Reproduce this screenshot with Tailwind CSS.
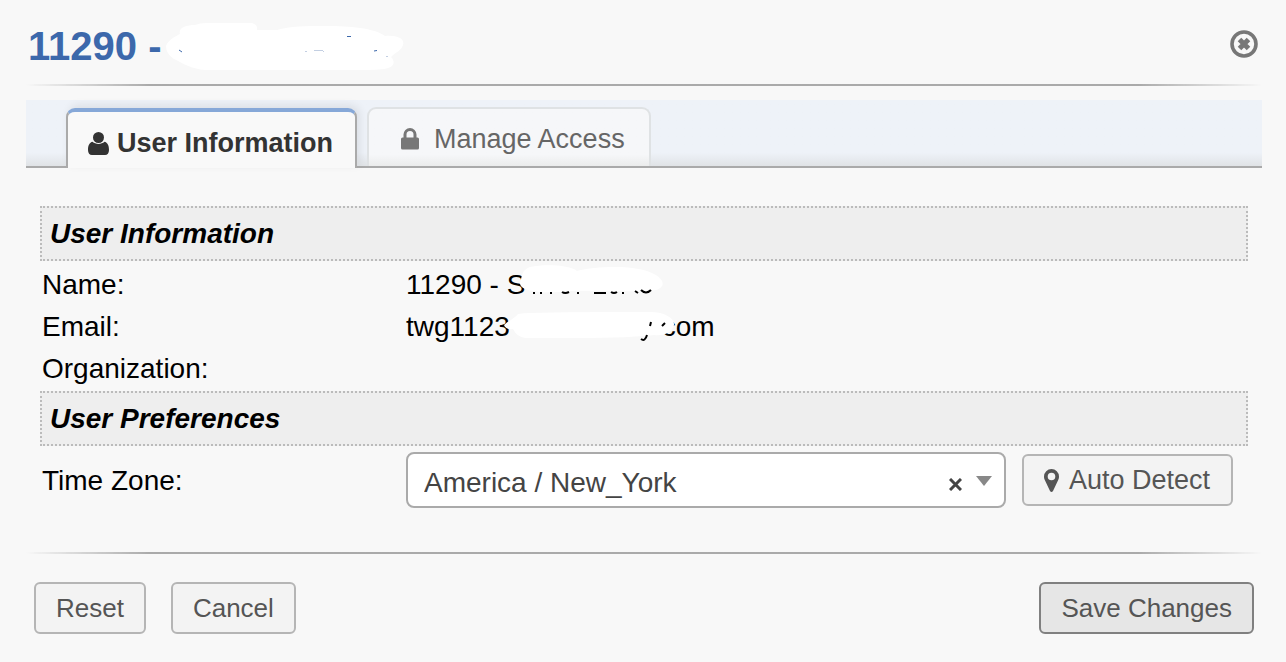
<!DOCTYPE html>
<html lang="en">

<head>
    <meta charset="UTF-8">
    <meta name="viewport" content="width=device-width, initial-scale=1.0">
    <title>User Information</title>
    <script src="https://cdn.jsdelivr.net/npm/@tailwindcss/browser@4"></script>
</head>

<body class="bg-[#f8f8f8] font-['Liberation_Sans',Arial,sans-serif] text-black">
    <!-- Header -->
    <header class="relative flex items-start justify-between px-7 pt-[26px] pb-[18px]">
        <h1 class="text-[40px] leading-10 font-bold text-[#3c68ab]">11290 -</h1>
        <svg class="absolute left-[164px] top-5" width="244" height="54" viewBox="164 20 244 54" aria-hidden="true">
            <path fill="#fff" d="M166 46C168 40 176 36 180 34C178 28 186 25 195 25Q200 23 206 23H252Q258 25 257 30H277C290 26 306 26 326 26C350 26 374 28 385 36C398 35 405 39 403 45C401 51 396 52 391 57C396 62 394 68 384 69Q376 70 366 70H205C192 69 184 64 174 59Q166 54 166 46Z"/>
            <path fill="none" stroke="#3c68ab" stroke-width="1" d="M179 50l3 2M347 36.500h4M374 51l3-.5"/>
            <path fill="none" stroke="#c3cfe2" stroke-width="1" d="M305 51.500h2M314 50.500h9M323 51.500h1M386 56.500h2"/>
        </svg>
        <button type="button" aria-label="Close" class="mt-1 cursor-pointer">
            <svg width="28" height="28" viewBox="0 0 28 28" fill="none" stroke="#777">
                <circle cx="14" cy="14" r="12" stroke-width="3.600"/>
                <path stroke-width="5" d="M9.500 9.500l9 9M18.500 9.500l-9 9"/>
            </svg>
        </button>
    </header>
    <div class="mr-6 ml-[26px] h-0.5 bg-linear-to-r from-transparent from-0% via-[#aaa] via-10% to-[#aaa] to-50% mask-r-from-90%"></div>

    <!-- Tabs -->
    <nav role="tablist" class="mr-6 ml-[26px] mt-[14px] flex h-[68px] items-end gap-2.5 border-b-2 border-[#aaa] bg-linear-to-t from-[#e0e3e6] to-[#eef2f8] to-20% pl-10">
        <button type="button" role="tab" aria-selected="true" class="-mb-0.5 flex h-[60px] items-center gap-2 rounded-t-[9px] border-x-2 border-t-4 border-x-[#aaa] border-t-[#86a8d8] bg-[#f9f9f9] pt-1.5 pr-[22px] pl-5 text-[27px] font-bold text-[#333] shadow-[3px_-3px_8px_rgba(0,0,0,0.08)]">
            <svg width="21" height="23" viewBox="0 0 21 23" fill="currentColor" aria-hidden="true">
                <circle cx="10.500" cy="5.500" r="5.500"/>
                <path d="M4.500 9.800C1.500 10.500 0 13.500 0 18C0 21 1.500 23 4 23H17C19.500 23 21 21 21 18C21 13.500 19.500 10.500 16.500 9.800C13.500 12.600 7.500 12.600 4.500 9.800Z"/>
            </svg>
            User Information
        </button>
        <button type="button" role="tab" aria-selected="false" class="flex h-[59px] items-center gap-[15px] rounded-t-[9px] border-2 border-b-0 border-[#dfe2e4] bg-linear-to-t from-[#ebecec] to-[#f6f7f9] to-20% pt-1 pr-6 pl-8 text-[27px] text-[#666]">
            <svg class="-mt-0.5" width="18" height="22" viewBox="0 0 18 22" aria-hidden="true">
                <path fill="none" stroke="#777" stroke-width="3" d="M4 11V6.500a5 5 0 0 1 10 0V11"/>
                <rect y="9.500" width="18" height="12" rx="1.500" fill="#777"/>
            </svg>
            Manage Access
        </button>
    </nav>

    <!-- Content -->
    <main class="mr-[38px] ml-10 mt-[38px] text-[28px] leading-[42px]">
        <h2 class="flex h-[55px] items-center border-2 border-dotted border-[#bbb] bg-[#eee] px-2 font-bold italic">User Information</h2>
        <dl class="grid grid-cols-[364px_1fr] px-0.5 pt-[3px] pb-px">
            <dt>Name:</dt>
            <dd class="relative">11290 - S
                <svg class="absolute left-[106px] top-0" width="154" height="36" viewBox="512 264 154 36" aria-hidden="true">
                    <path fill="#fff" d="M520 284C522 275 522 270 530 267C545 264 570 265 577 271C598 266 635 265 652 273C665 279 666 287 656 290C640 293 610 290 570 291Q545 294 528 290Q521 288 520 284Z"/>
                    <path fill="none" stroke="#000" stroke-width="2" d="M533 293h2M540 293h2M550 293h2M562 292q3 2 7 0M577 293h2M594 293h12M611 292q3 2 6 0M622 293h2M635 291l3 2M641 290q5 5 10 0"/>
                </svg>
            </dd>
            <dt>Email:</dt>
            <dd class="relative flex gap-[152px]"><span>twg1123</span><span>com</span>
                <svg class="absolute left-[92px] top-0" width="180" height="40" viewBox="498 306 180 40" aria-hidden="true">
                    <path fill="#fff" d="M504 325C508 321 514 319 518 314Q524 313 530 313C560 312 600 312 650 312C666 312 675 319 674 325C672 333 664 336 654 335C620 339 560 338 525 338Q517 337 513 329Q506 330 504 325Z"/>
                    <path fill="none" stroke="#000" stroke-width="2" d="M641 339q4 3 6-4M650 326l1-4M662 326l3-3"/>
                </svg>
            </dd>
            <dt>Organization:</dt>
            <dd></dd>
        </dl>
        <h2 class="flex h-[55px] items-center border-2 border-dotted border-[#bbb] bg-[#eee] px-2 font-bold italic">User Preferences</h2>
        <div class="grid grid-cols-[364px_1fr] items-center pt-1.5 pr-[15px] pl-0.5">
            <label for="timezone" class="pt-0.5">Time Zone:</label>
            <div class="flex items-center gap-4">
                <div class="relative flex-1">
                    <select id="timezone" class="block h-14 w-full appearance-none rounded-[8px] border-2 border-[#aaa] bg-white pt-1.5 pr-20 pl-4 text-[28px] leading-9 text-[#444]">
                        <option>America / New_York</option>
                    </select>
                    <button type="button" aria-label="Clear time zone" class="absolute top-[26px] right-11">
                        <svg width="13" height="13" viewBox="0 0 13 13" fill="none" stroke="#444" stroke-width="3"><path d="M1 1l11 11M12 1L1 12"/></svg>
                    </button>
                    <svg class="pointer-events-none absolute top-6 right-3.5" width="16" height="10" viewBox="0 0 16 10" aria-hidden="true"><path fill="#888" d="M0 0h16L8 10z"/></svg>
                </div>
                <button type="button" class="flex h-[52px] items-center gap-2.5 rounded-md border-2 border-[#b5b5b5] bg-[#f3f3f3] pr-[21px] pl-5 text-[27px] text-[#555]">
                    <svg width="15" height="23" viewBox="0 0 15 23" fill="currentColor" aria-hidden="true"><path fill-rule="evenodd" d="M7.500 0A7.500 7.500 0 0 1 15 7.500C15 9 14.700 10 14.200 11L9 22Q7.500 24 6 22L.8 11C.3 10 0 9 0 7.500A7.500 7.500 0 0 1 7.500 0ZM7.500 3.700a3.800 3.800 0 1 0 0 7.600a3.800 3.800 0 1 0 0-7.600Z"/></svg>
                    Auto Detect
                </button>
            </div>
        </div>
    </main>

    <!-- Footer -->
    <div class="mr-6 ml-[26px] mt-11 h-0.5 bg-linear-to-r from-transparent from-0% via-[#aaa] via-10% to-[#aaa] to-50% mask-r-from-90%"></div>
    <footer class="flex pt-7 pr-8 pl-[34px] text-[26px] text-[#555]">
        <button type="button" class="h-[52px] rounded-md border-2 border-[#b5b5b5] bg-[#f3f3f3] px-5">Reset</button>
        <button type="button" class="ml-[25px] h-[52px] rounded-md border-2 border-[#b5b5b5] bg-[#f3f3f3] px-5">Cancel</button>
        <button type="button" class="ml-auto h-[52px] rounded-md border-2 border-[#808080] bg-[#e6e6e6] px-5">Save Changes</button>
    </footer>
</body>
</html>
